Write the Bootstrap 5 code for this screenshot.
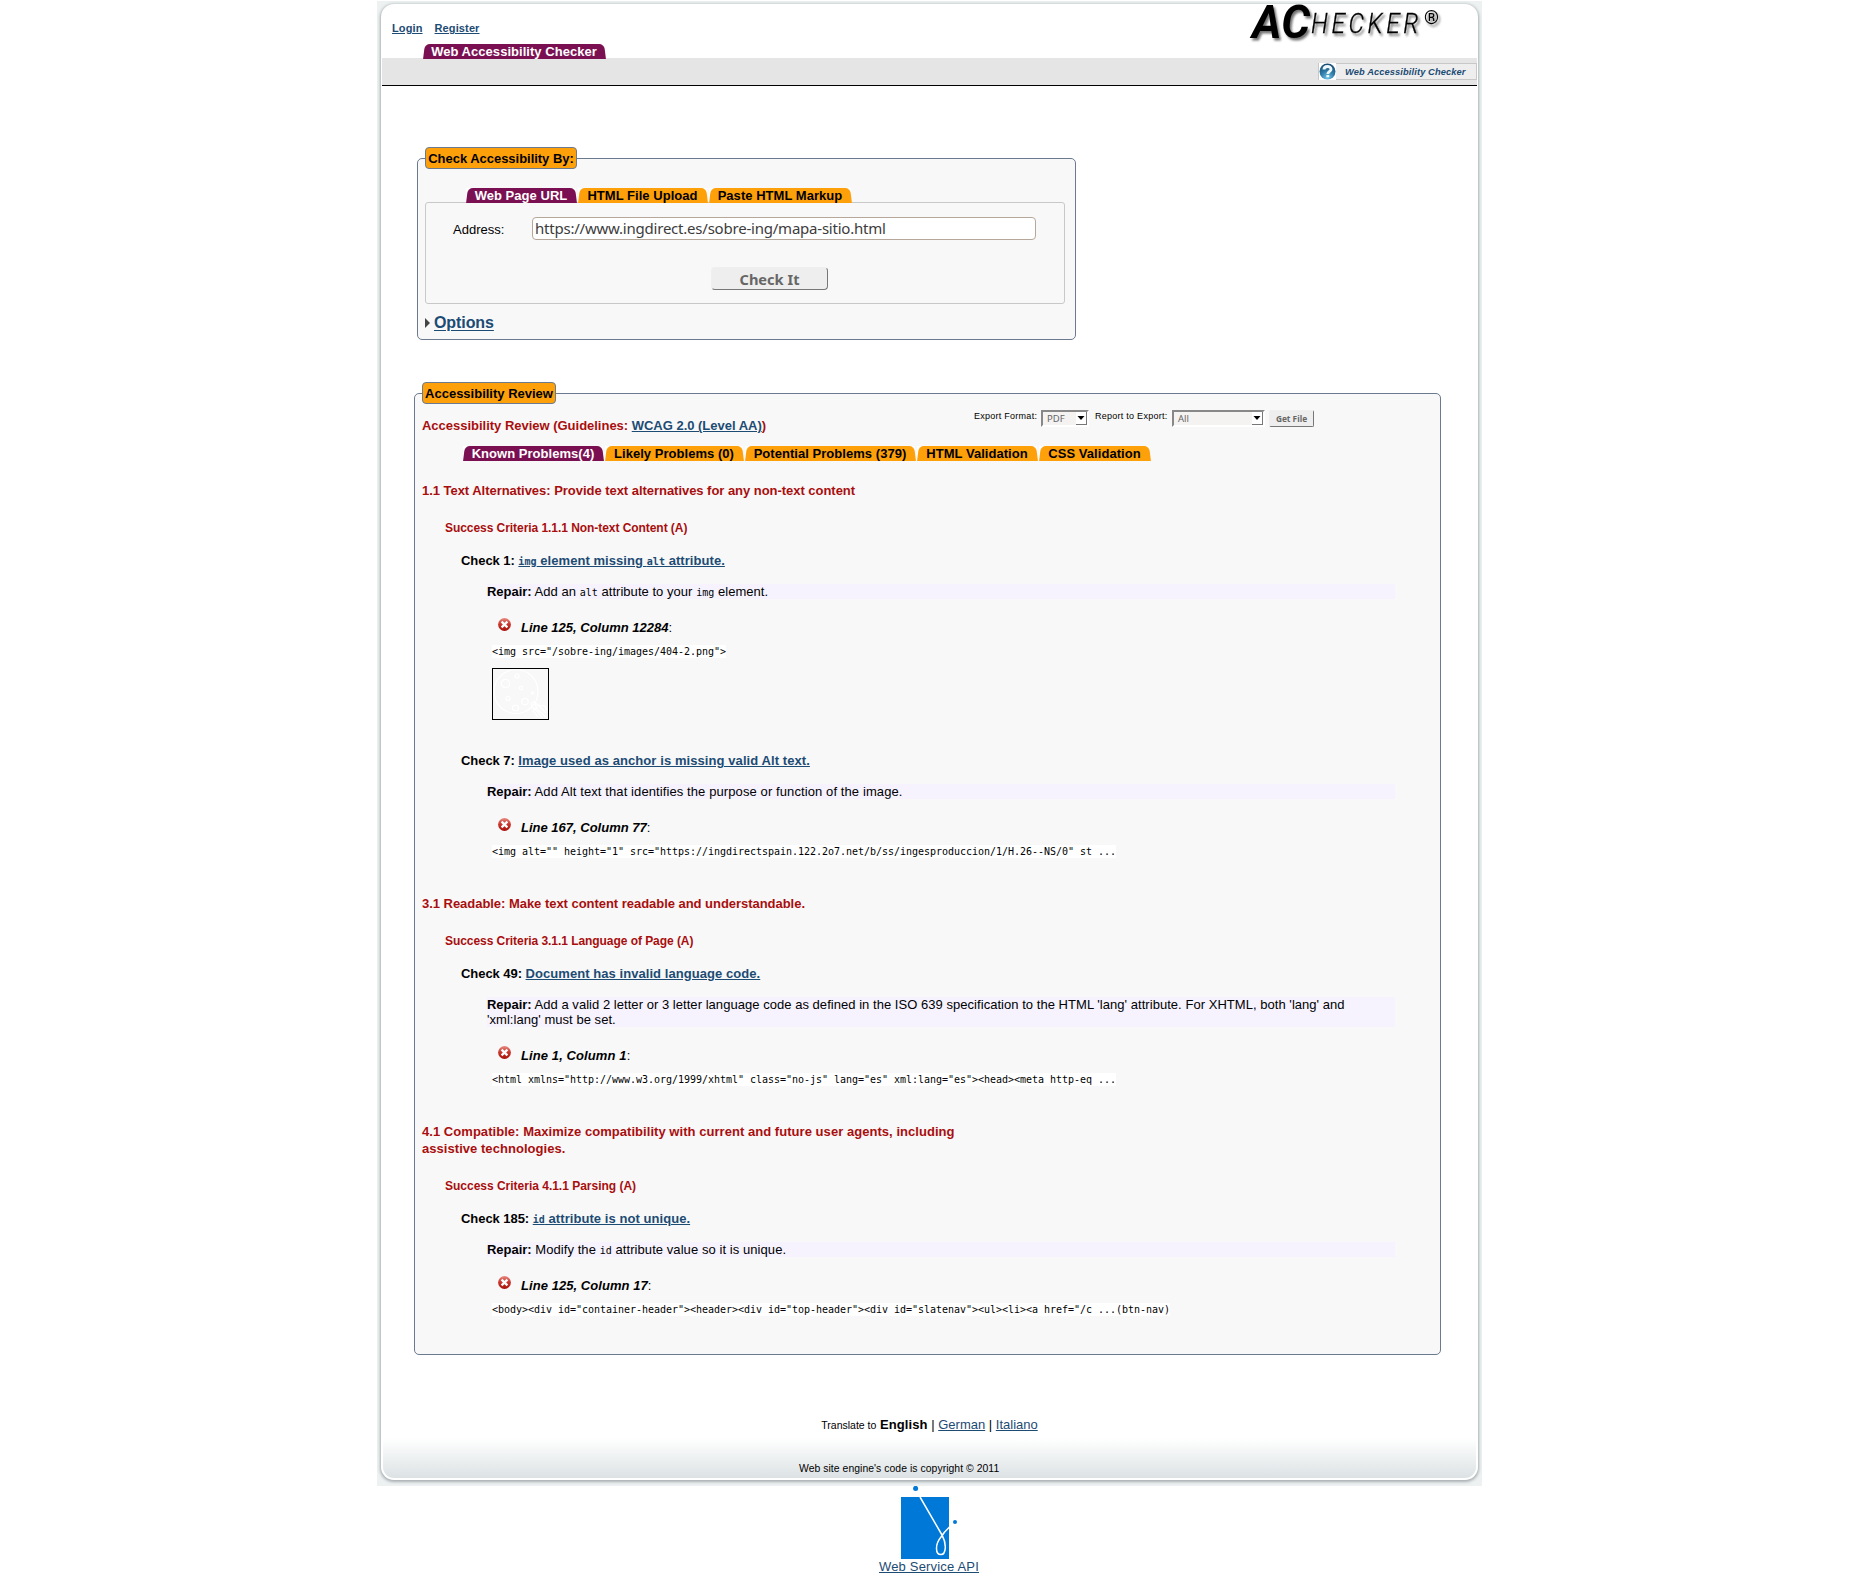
<!DOCTYPE html>
<html lang="en">
<head>
<meta charset="utf-8">
<title>Web Accessibility Checker</title>
<link href="https://cdn.jsdelivr.net/npm/bootstrap@5.3.0/dist/css/bootstrap.min.css" rel="stylesheet">
<style>
body{font:13px/16px "Liberation Sans",Arial,sans-serif;color:#000;background:#fff}
a{color:#1c4b74;text-decoration:underline;text-underline-offset:1px}
.page-shell{width:1105px;margin:1px 0 0 377px;padding:3px 4px 6px;background:#edf1f2}
.page-sheet{height:1476px;border-radius:13px;background:#fff;box-shadow:0 1px 3px 1px #a9b0b2}
.top-area{height:54px;padding:0 1px}
.login-links{font-size:11px;font-weight:700;padding:16px 0 0 10px;gap:12px;height:40px;letter-spacing:.12px}
.tab-row{gap:2px}
.tab-item{position:relative;z-index:0;height:15px;line-height:15px;font-weight:700;text-align:center;white-space:nowrap;color:#000;text-decoration:none;letter-spacing:.04px;--tab:#fea00a;background:linear-gradient(#fff,#fff);isolation:isolate}
.tab-item::before,.tab-item::after{content:"";position:absolute;z-index:-1;top:0;bottom:0;width:calc(50% + 1px);background:var(--tab)}
.tab-item::before{left:.5px;transform:skewX(-7deg);border-top-left-radius:5px}
.tab-item::after{right:.5px;transform:skewX(7deg);border-top-right-radius:5px}
.tab-item.active{--tab:#7a1052;color:#fff}
.crumb-bar{height:28px;margin:0 1px;background:#e5e5e5;border-bottom:1px solid #000}
.help-box{width:159px;height:17px;border:1px solid #c8c8c8;background:#eee;font-size:9.3px;font-weight:700;font-style:italic}
.help-box a{text-decoration:none;margin-left:9px;letter-spacing:.11px}
.panel-box{border:1px solid #6b7a8f;border-radius:5px;background:#f8f8f8}
.panel-title{height:22px;line-height:21px;border:1px solid #6b7a8f;border-radius:4px;background:#fea00a;font-weight:700;text-align:center;margin-top:-12px;white-space:nowrap}
.url-box{width:640px;height:102px;border:1px solid #c8c8c8;border-radius:3px;margin:-1px 0 0 7px}
.tab-row.over{position:relative;z-index:1}
.url-input{width:504px;height:23px;border:1px solid #b5a89a;border-radius:4px;background:#fff;color:#3c3c3c;font:15px/19px "Noto Sans",sans-serif;letter-spacing:-.22px;padding:0 2px 2px}
.check-btn{width:117px;height:23px;border:1px solid #efefef;border-right-color:#777;border-bottom-color:#777;border-radius:4px;background:#eee;color:#666;font:700 14.6px/18px "Noto Sans",sans-serif;padding:0}
.opt-link{font-size:16px;line-height:18px;font-weight:700;letter-spacing:-.08px;text-underline-offset:2px}
.red-head{color:#a90e0e;font-size:13px;line-height:17px;font-weight:700;margin:0;letter-spacing:-.035px}
.group-head{width:560px}
.crit-head{font-size:12px;line-height:16px;margin:21px 0 0 23px;letter-spacing:-.055px}
.check-line{font-weight:700;margin:17px 0 0 39px;letter-spacing:-.05px}
.check-line a{letter-spacing:.06px}
.check-line code,.repair-line code{font:10px "DejaVu Sans Mono",monospace;color:inherit}
.check-line code{font-weight:700}
.repair-line{width:908px;line-height:15px;margin:15px 0 0 65px;background:#f6f3ff;letter-spacing:.04px}
.repair-line b{letter-spacing:-.03px}
.spot-line{margin:21px 0 0 76px;height:16px}
.spot-line svg{margin-right:10px;margin-top:-2px}
.src-line{height:13px;margin:9px 0 0 70px}
.src-line code{display:block;width:max-content;font:10px/13px "DejaVu Sans Mono",monospace;letter-spacing:-.02px;color:#000;background:#fff;white-space:pre}
.thumb-box{display:block;margin:10px 0 0 70px}
.export-row{font-size:9px;line-height:12px;height:18px}
.export-row>span{letter-spacing:.26px;white-space:nowrap}
.old-select{height:17px;border:2px solid #fff;border-top-color:#888;border-left-color:#888;background:#f4f3f1;color:#666;font:9.5px/14px "Noto Sans",sans-serif;padding-left:4px}
.old-arrow{width:11px;height:13px;background:#fff;border-right:1px solid #777;border-bottom:1px solid #777}
.get-btn{width:45px;height:17px;border:1px solid #efefef;border-right-color:#777;border-bottom-color:#777;border-radius:2px;background:#eee;color:#666;font:700 8.3px/14px "Noto Sans",sans-serif;padding:0}
.lang-row{height:20px;line-height:20px;margin-top:60px}
.foot-area{height:40px;margin:0 2px 2px;border-radius:0 0 11px 11px;background:linear-gradient(#fff,#fafbfb 15%,#dce2e4);font-size:10.4px}
.api-area{width:120px;margin-left:869px}
</style>
</head>
<body>
<div class="page-shell">
 <div class="page-sheet d-flex flex-column">
  <header>
   <div class="top-area d-flex justify-content-between">
    <div>
     <div class="login-links d-flex"><a href="#">Login</a><a href="#">Register</a></div>
     <div class="tab-row over d-flex" style="margin-left:41px"><a class="tab-item active" style="width:182px">Web Accessibility Checker</a></div>
    </div>
    <svg width="200" height="48" viewBox="1245 4 200 48" overflow="visible" style="margin-right:32px">
     <defs><filter id="soft" x="-10%" y="-20%" width="120%" height="160%"><feDropShadow dx="2" dy="2.5" stdDeviation="1.3" flood-color="#000" flood-opacity=".55"/></filter></defs>
     <g filter="url(#soft)" font-family="Roboto,sans-serif" font-style="italic">
      <text x="1252" y="38" font-size="46" font-weight="700" textLength="58" lengthAdjust="spacingAndGlyphs">AC</text>
      <text transform="translate(1311 32.500) scale(.86 1)" font-size="28.500" font-weight="300" stroke="#000" stroke-width=".3" letter-spacing="4.200">HECKER</text>
      <text x="1424" y="24" font-size="18" font-style="normal" textLength="15" lengthAdjust="spacingAndGlyphs">®</text>
     </g>
    </svg>
   </div>
   <div class="crumb-bar d-flex justify-content-end align-items-center">
    <div class="help-box d-flex align-items-center">
     <svg width="17" height="17" viewBox="0 0 17 17"><defs><radialGradient id="orb" cx=".5" cy=".9" r=".9"><stop offset="0" stop-color="#70c4e8"/><stop offset=".5" stop-color="#2d7aa6"/><stop offset="1" stop-color="#174a70"/></radialGradient></defs><rect width="17" height="17" fill="#fff"/><circle cx="8.5" cy="8.500" r="8" fill="url(#orb)"/><path d="M5 6.500C5 2.500 12 2.500 12 6.300C12 8.500 9 8.300 8.800 11M8.800 12v2.200" fill="none" stroke="#eef8fc" stroke-width="2.900"/></svg>
     <a href="#">Web Accessibility Checker</a>
    </div>
   </div>
  </header>

  <section class="panel-box" style="width:659px;height:182px;margin:72px 0 0 36px">
   <div class="panel-title" style="width:152px;margin-left:7px;letter-spacing:-.03px">Check Accessibility By:</div>
   <div class="tab-row over d-flex" style="margin:19px 0 0 48px">
    <a class="tab-item active" style="width:110px">Web Page URL</a><a class="tab-item" style="width:129px">HTML File Upload</a><a class="tab-item" style="width:142px">Paste HTML Markup</a>
   </div>
   <div class="url-box">
    <div class="d-flex align-items-center" style="margin:14px 0 0 27px"><label for="addr" style="width:79px;padding-top:2px">Address:</label><input id="addr" class="url-input" value="https://www.ingdirect.es/sobre-ing/mapa-sitio.html"></div>
    <button class="check-btn d-block" style="margin:27px 0 0 285px">Check It</button>
   </div>
   <div class="d-flex align-items-center" style="margin:10px 0 0 7px"><svg width="9" height="10" viewBox="0 0 9 10"><path d="M0 0L5 5L0 10z" fill="#444"/></svg><a class="opt-link" href="#">Options</a></div>
  </section>

  <section class="panel-box" style="width:1027px;height:962px;margin:53px 0 0 33px;padding-left:7px">
   <div class="panel-title" style="width:134px">Accessibility Review</div>
   <div class="d-flex" style="height:42px;padding-top:6px">
    <h2 class="red-head" style="width:552px;padding-top:7px;letter-spacing:-.015px">Accessibility Review (Guidelines: <a href="#">WCAG 2.0 (Level AA)</a>)</h2>
    <div class="export-row d-flex">
     <span style="width:67px">Export Format:</span>
     <div class="old-select d-flex justify-content-between" style="width:48px">PDF<span class="old-arrow"><svg class="d-block" width="10" height="11"><path d="M1.500 4h7l-3.500 4z"/></svg></span></div>
     <span style="width:77px;padding-left:6px;margin-right:6px;flex:none">Report to Export:</span>
     <div class="old-select d-flex justify-content-between" style="width:93px">All<span class="old-arrow"><svg class="d-block" width="10" height="11"><path d="M1.500 4h7l-3.500 4z"/></svg></span></div>
     <button class="get-btn" style="margin-left:4px">Get File</button>
    </div>
   </div>
   <div class="tab-row d-flex" style="margin-left:41px">
    <a class="tab-item active" style="width:140px">Known Problems(4)</a><a class="tab-item" style="width:138px">Likely Problems (0)</a><a class="tab-item" style="width:170px">Potential Problems (379)</a><a class="tab-item" style="width:120px">HTML Validation</a><a class="tab-item" style="width:111px">CSS Validation</a>
   </div>

   <h3 class="red-head group-head" style="margin-top:21px">1.1 Text Alternatives: Provide text alternatives for any non-text content</h3>
   <h4 class="red-head crit-head">Success Criteria 1.1.1 Non-text Content (A)</h4>
   <div class="check-line">Check 1: <a href="#"><code>img</code> element missing <code>alt</code> attribute.</a></div>
   <div class="repair-line"><b>Repair:</b> Add an <code>alt</code> attribute to your <code>img</code> element.</div>
   <div class="spot-line d-flex"><svg width="13" height="13" viewBox="0 0 13 13"><defs><linearGradient id="err" x1="0" y1="0" x2="0" y2="1"><stop offset="0" stop-color="#e88c84"/><stop offset=".45" stop-color="#c93a30"/><stop offset="1" stop-color="#a81008"/></linearGradient><g id="errIcon"><circle cx="6.5" cy="6.5" r="6.400" fill="url(#err)"/><path d="M3.600 3.600L9.400 9.400M9.400 3.600L3.600 9.400" stroke="#fff" stroke-width="2.200"/></g></defs><use href="#errIcon"/></svg><span><b><i>Line 125, Column 12284</i></b>:</span></div>
   <div class="src-line"><code>&lt;img src="/sobre-ing/images/404-2.png"&gt;</code></div>
   <svg class="thumb-box" width="57" height="52" viewBox="0 0 57 52"><rect x=".5" y=".5" width="56" height="51" fill="#f8f8f8" stroke="#000"/><g fill="none" stroke="#fff" stroke-width="1.200"><circle cx="24" cy="23.500" r="22"/><circle cx="13.500" cy="15.500" r="4.200"/><circle cx="25" cy="8" r="2"/><circle cx="29" cy="20" r="1.700"/><circle cx="40.500" cy="25" r="1.200"/><circle cx="16" cy="30.500" r="2"/><circle cx="33" cy="33.500" r="3.200"/><circle cx="23.500" cy="40" r="3"/><path d="M39 35l3-1 4 3 8 8M39 35l1 4 6 5 4 6M42 34l4 8 8 7M45 39l-4 4 5 6M46 37l7 1 2 5"/></g></svg>

   <div class="check-line" style="margin-top:33px">Check 7: <a href="#" style="letter-spacing:.08px">Image used as anchor is missing valid Alt text.</a></div>
   <div class="repair-line" style="letter-spacing:.1px"><b>Repair:</b> Add Alt text that identifies the purpose or function of the image.</div>
   <div class="spot-line d-flex"><svg width="13" height="13"><use href="#errIcon"/></svg><span><b><i>Line 167, Column 77</i></b>:</span></div>
   <div class="src-line"><code>&lt;img alt="" height="1" src="https://ingdirectspain.122.2o7.net/b/ss/ingesproduccion/1/H.26--NS/0" st ...</code></div>

   <h3 class="red-head group-head" style="margin-top:37px">3.1 Readable: Make text content readable and understandable.</h3>
   <h4 class="red-head crit-head">Success Criteria 3.1.1 Language of Page (A)</h4>
   <div class="check-line">Check 49: <a href="#">Document has invalid language code.</a></div>
   <div class="repair-line"><b>Repair:</b> Add a valid 2 letter or 3 letter language code as defined in the ISO 639 specification to the HTML 'lang' attribute. For XHTML, both 'lang' and 'xml:lang' must be set.</div>
   <div class="spot-line d-flex"><svg width="13" height="13"><use href="#errIcon"/></svg><span style="letter-spacing:.1px"><b><i>Line 1, Column 1</i></b>:</span></div>
   <div class="src-line"><code>&lt;html xmlns="http://www.w3.org/1999/xhtml" class="no-js" lang="es" xml:lang="es"&gt;&lt;head&gt;&lt;meta http-eq ...</code></div>

   <h3 class="red-head group-head" style="margin-top:37px;letter-spacing:.045px">4.1 Compatible: Maximize compatibility with current and future user agents, including assistive technologies.</h3>
   <h4 class="red-head crit-head" style="letter-spacing:-.01px">Success Criteria 4.1.1 Parsing (A)</h4>
   <div class="check-line">Check 185: <a href="#"><code>id</code> attribute is not unique.</a></div>
   <div class="repair-line" style="letter-spacing:.07px"><b>Repair:</b> Modify the <code>id</code> attribute value so it is unique.</div>
   <div class="spot-line d-flex"><svg width="13" height="13"><use href="#errIcon"/></svg><span style="letter-spacing:.06px"><b><i>Line 125, Column 17</i></b>:</span></div>
   <div class="src-line"><code>&lt;body&gt;&lt;div id="container-header"&gt;&lt;header&gt;&lt;div id="top-header"&gt;&lt;div id="slatenav"&gt;&lt;ul&gt;&lt;li&gt;&lt;a href="/c ...(btn-nav)</code></div>
  </section>

  <div class="lang-row text-center"><span style="font-size:10.5px">Translate to</span> <b style="letter-spacing:.1px">English</b> | <a href="#">German</a> | <a href="#">Italiano</a></div>
  <footer class="foot-area mt-auto d-flex"><span style="margin:23px 0 0 416px;letter-spacing:.05px">Web site engine's code is copyright © 2011</span></footer>
 </div>
</div>
<div class="api-area text-center">
 <svg class="d-block mx-auto" width="60" height="73" viewBox="899 1486 60 73"><path d="M901 1497h48v62h-48z" fill="#0078d7"/><circle cx="915.600" cy="1488.400" r="2.500" fill="#0078d7"/><circle cx="955" cy="1522" r="2" fill="#0078d7"/><path d="M920 1497L942 1535C947 1544 946 1554.500 941 1554.500C935 1554.500 935 1544 941 1537Q944 1532 949.500 1527" fill="none" stroke="#fff" stroke-width="1.500"/></svg>
 <a href="#" class="d-block" style="line-height:15px;letter-spacing:.18px">Web Service API</a>
</div>
<script src="https://cdn.jsdelivr.net/npm/bootstrap@5.3.0/dist/js/bootstrap.bundle.min.js"></script>
</body>
</html>
